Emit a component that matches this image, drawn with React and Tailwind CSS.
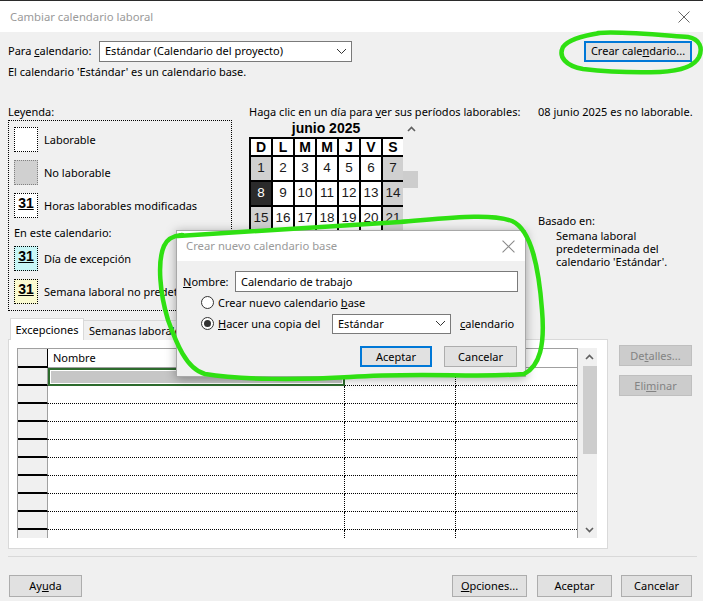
import React from 'react';

const CAL = "font-['Liberation_Sans',Arial,sans-serif]";

function CloseX({ color = '#666666', size = 12 }) {
  return (
    <svg width={size} height={size} viewBox="0 0 12 12">
      <path d="M0.5 0.5 L11.5 11.5 M11.5 0.5 L0.5 11.5" stroke={color} strokeWidth="1" fill="none" />
    </svg>
  );
}

function Chevron() {
  return (
    <svg width="11" height="7" viewBox="0 0 11 7">
      <path d="M1 1 L5.5 5.5 L10 1" stroke="#333333" strokeWidth="1" fill="none" />
    </svg>
  );
}

function ScrollArrow({ down = false }) {
  return (
    <svg width="9" height="6" viewBox="0 0 9 6">
      <path d={down ? 'M1 1 L4.5 4.5 L8 1' : 'M1 5 L4.5 1.5 L8 5'} stroke="#606060" strokeWidth="1.6" fill="none" />
    </svg>
  );
}

function Radio({ checked }) {
  return (
    <div className="w-[13px] h-[13px] rounded-full border border-[#333333] bg-white flex items-center justify-center shrink-0">
      {checked && <div className="w-[7px] h-[7px] rounded-full bg-[#333333]" />}
    </div>
  );
}

function LegendBox({ kind }) {
  const styles = {
    white: 'bg-white border-black',
    gray: 'bg-[#d0d0d0] border-[#808080]',
    mod: 'bg-white border-black',
    cyan: 'bg-[#c8f6f6] border-black',
    yellow: 'bg-[#fafad0] border-black',
  };
  return (
    <div className={`w-[24px] h-[25px] border border-dotted shrink-0 flex justify-center ${styles[kind]}`}>
      {kind !== 'white' && kind !== 'gray' && (
        <span className={`${CAL} text-[14px] font-bold underline leading-[16px] mt-[1px]`}>31</span>
      )}
    </div>
  );
}

function LegendItem({ kind, label, className = '' }) {
  return (
    <div className={`flex items-center h-[25px] ${className}`}>
      <LegendBox kind={kind} />
      <span className="ml-[6px] whitespace-nowrap">{label}</span>
    </div>
  );
}

// only the first three weeks show above the modal dialog
const weeks = [
  [1, 2, 3, 4, 5, 6, 7],
  [8, 9, 10, 11, 12, 13, 14],
  [15, 16, 17, 18, 19, 20, 21],
];

function Calendar() {
  return (
    <div className={`grid grid-cols-[repeat(7,20px)] gap-[2px] bg-black pl-[2px] pt-[2px] w-[154px] ${CAL}`}>
      {['D', 'L', 'M', 'M', 'J', 'V', 'S'].map((d, i) => (
        <div key={'h' + i} className="h-[16px] bg-white flex items-center justify-center text-[14px] font-bold">
          {d}
        </div>
      ))}
      {weeks.flat().map((n, i) => {
        const col = i % 7;
        const weekend = col === 0 || col === 6;
        let cls = 'bg-white text-[#1a1a1a]';
        if (n === 8) cls = 'bg-[#2b2b2b] text-white';
        else if (weekend) cls = 'bg-[#d0d0d0] text-[#1a1a1a]';
        return (
          <div key={i} className={`h-[23px] flex items-center justify-center pb-[2px] text-[13.5px] ${cls}`}>
            {n}
          </div>
        );
      })}
    </div>
  );
}

function TableRow({ selected }) {
  return (
    <div className="flex h-[18px] shrink-0">
      <div className="w-[30px] bg-[#f0f0f0] border-b-2 border-black border-r border-r-[#a0a0a0]" />
      {selected ? (
        <div className="w-[297px] border-2 border-[#2d6b2d] bg-white p-px">
          <div className="w-full h-full bg-[#c6c6c6]" />
        </div>
      ) : (
        <div className="w-[297px] border-b border-r border-dotted border-black" />
      )}
      <div className="w-[111px] border-b border-r border-dotted border-black" />
      <div className="w-[121px] border-b border-dotted border-black" />
    </div>
  );
}

function WinButton({ children, className = '' }) {
  return (
    <div className={`h-[22px] bg-[#e1e1e1] border border-[#adadad] flex items-center justify-center ${className}`}>
      {children}
    </div>
  );
}

export default function App() {
  return (
    <div className="relative w-[703px] h-[601px] overflow-hidden bg-[#f0f0f0] text-[11px] leading-[16px] text-black font-['Noto_Sans',sans-serif]">
      <div className="h-px bg-[#2b2b2b]" />
      {/* title bar */}
      <div className="h-[31px] bg-white flex items-center justify-between pl-[10px] pr-[13px]">
        <span className="text-[11.3px] text-[#9a9a9a]">Cambiar calendario laboral</span>
        <CloseX />
      </div>

      <div className="px-[8px]">
        {/* calendar selector */}
        <div className="mt-[8px] flex items-center h-[22px]">
          <span className="w-[91px] whitespace-nowrap">
            Para <u>c</u>alendario:
          </span>
          <div className="w-[253px] h-[21px] bg-white border border-[#7a7a7a] flex items-center justify-between pl-[5px] pr-[4px]">
            <span>Estándar (Calendario del proyecto)</span>
            <Chevron />
          </div>
          <div className="ml-auto mr-[3px] w-[108px] h-[21px] border-2 border-[#0078d7] bg-[#e1e1e1] flex items-center justify-center">
            Crear cale<u>n</u>dario...
          </div>
        </div>
        <div className="mt-[2px]">El calendario 'Estándar' es un calendario base.</div>

        {/* legend / calendar / info */}
        <div className="mt-[24px] flex">
          <div className="w-[224px] shrink-0">
            <div>Leyenda:</div>
            <div className="h-[191px] border border-dotted border-black pl-[5px] pt-[6px]">
              <LegendItem kind="white" label="Laborable" />
              <LegendItem kind="gray" label="No laborable" className="mt-[8px]" />
              <LegendItem kind="mod" label="Horas laborables modificadas" className="mt-[8px]" />
              <div className="mt-[7px]">En este calendario:</div>
              <LegendItem kind="cyan" label="Día de excepción" className="mt-[5px]" />
              <LegendItem kind="yellow" label="Semana laboral no predeterminada" className="mt-[8px]" />
            </div>
          </div>

          <div className="ml-[17px] w-[289px] shrink-0">
            <div className="whitespace-nowrap">
              Haga clic en un día para <u>v</u>er sus períodos laborables:
            </div>
            <div className="flex">
              <div className="w-[154px]">
                <div className={`h-[17px] text-center font-bold text-[14px] leading-[17px] ${CAL}`}>junio 2025</div>
                <Calendar />
              </div>
              <div className="w-[16px]">
                <div className="h-[17px] flex items-center justify-center">
                  <ScrollArrow />
                </div>
                <div className="mt-[34px] w-[15px] h-[17px] bg-[#cdcdcd]" />
              </div>
            </div>
          </div>

          <div className="flex-1">
            <div className="whitespace-nowrap">08 junio 2025 es no laborable.</div>
            <div className="mt-[93px]">Basado en:</div>
            <div className="pl-[18px] leading-[13px]">
              Semana laboral
              <br />
              predeterminada del
              <br />
              calendario 'Estándar'.
            </div>
          </div>
        </div>

        {/* tabs */}
        <div className="mt-[7px] flex items-end h-[22px] -mb-px relative z-10">
          <div className="ml-[2px] h-[22px] w-[74px] bg-white border border-[#d9d9d9] border-b-0 flex items-center justify-center">
            Excepciones
          </div>
          <div className="h-[20px] px-[5px] bg-[#f0f0f0] border border-[#d9d9d9] border-l-0 border-b-0 flex items-center">
            Semanas laborales
          </div>
        </div>

        <div className="flex items-start">
          <div className="w-[600px] h-[210px] bg-white border border-[#d9d9d9] pl-[8px] pt-[8px] shrink-0">
            <div className="flex h-[190px] w-[580px]">
              <div className="w-[561px] h-full border-l border-t border-r border-[#a0a0a0] overflow-hidden flex flex-col">
                <div className="flex h-[19px] shrink-0">
                  <div className="w-[30px] bg-[#f0f0f0] border-r border-b-2 border-black" />
                  <div className="w-[297px] pl-[5px] flex items-center border-b border-[#a0a0a0]">Nombre</div>
                  <div className="w-[111px] border-b border-[#a0a0a0]" />
                  <div className="w-[121px] border-b border-[#a0a0a0]" />
                </div>
                {Array.from({ length: 10 }).map((_, i) => (
                  <TableRow key={i} selected={i === 0} />
                ))}
              </div>
              <div className="w-[19px] h-full bg-[#f0f0f0] flex flex-col">
                <div className="h-[18px] flex items-center justify-center pl-[3px]">
                  <ScrollArrow />
                </div>
                <div className="ml-[5px] w-[14px] h-[88px] bg-[#cdcdcd]" />
                <div className="flex-1" />
                <div className="h-[16px] flex items-center justify-center pl-[3px]">
                  <ScrollArrow down />
                </div>
              </div>
            </div>
          </div>
          <div className="ml-[11px] mt-[6px] flex flex-col gap-[9px]">
            <div className="w-[73px] h-[21px] bg-[#cccccc] border border-[#bfbfbf] text-[#838383] flex items-center justify-center">
              De<u>t</u>alles...
            </div>
            <div className="w-[73px] h-[21px] bg-[#cccccc] border border-[#bfbfbf] text-[#838383] flex items-center justify-center">
              Eli<u>m</u>inar
            </div>
          </div>
        </div>

        <div className="mt-[7px] h-px bg-[#d9d9d9] -mr-[2px]" />

        <div className="mt-[18px] flex">
          <WinButton className="ml-[1px] w-[73px]">
            Ay<u>u</u>da
          </WinButton>
          <WinButton className="ml-auto w-[75px]">
            <u>O</u>pciones...
          </WinButton>
          <WinButton className="ml-[10px] w-[75px]">Aceptar</WinButton>
          <WinButton className="ml-[9px] mr-[3px] w-[71px]">Cancelar</WinButton>
        </div>
      </div>

      {/* modal dialog on top */}
      <div className="absolute z-20 left-[176px] top-[230px] w-[350px] h-[147px] bg-[#f0f0f0] border border-[#a8a8a8] shadow-[0_2px_10px_rgba(0,0,0,0.35)]">
        <div className="h-[30px] bg-white flex items-center justify-between pl-[9px] pr-[10px]">
          <span className="text-[11.3px] text-[#9a9a9a]">Crear nuevo calendario base</span>
          <CloseX color="#8a8a8a" size={13} />
        </div>
        <div className="px-[6px]">
          <div className="mt-[10px] flex items-center h-[21px]">
            <span className="w-[52px]">
              <u>N</u>ombre:
            </span>
            <div className="w-[283px] h-[21px] bg-white border border-[#7a7a7a] pl-[5px] flex items-center">
              Calendario de trabajo
            </div>
          </div>
          <div className="h-[21px] pl-[18px] flex items-center">
            <Radio />
            <span className="ml-[4px]">
              Crear nuevo calendario <u>b</u>ase
            </span>
          </div>
          <div className="h-[21px] pl-[18px] flex items-center">
            <Radio checked />
            <span className="ml-[4px] w-[114px]">
              <u>H</u>acer una copia del
            </span>
            <div className="w-[119px] h-[20px] bg-white border border-[#7a7a7a] pl-[5px] pr-[4px] flex items-center justify-between">
              <span>Estándar</span>
              <Chevron />
            </div>
            <span className="ml-[9px]">
              <u>c</u>alendario
            </span>
          </div>
          <div className="mt-[12px] flex justify-end gap-[12px] pr-[2px]">
            <div className="w-[72px] h-[21px] border-2 border-[#0078d7] bg-[#e1e1e1] flex items-center justify-center">
              Aceptar
            </div>
            <div className="w-[73px] h-[21px] border border-[#adadad] bg-[#e1e1e1] flex items-center justify-center">
              Cancelar
            </div>
          </div>
        </div>
      </div>

      {/* green hand-drawn highlights */}
      <svg className="absolute z-30 left-0 top-0 pointer-events-none" width="703" height="601" viewBox="0 0 703 601">
        <path
          d="M598 33 C620 31 660 35 688 37 C700 39 703 48 699 57 C694 67 680 71 660 72 C630 73 600 71 583 69 C566 66 558 57 563 47 C568 40 580 36 600 33"
          stroke="#2fe012"
          strokeWidth="4.5"
          fill="none"
          strokeLinecap="round"
        />
        <path
          d="M178 236 C220 233 300 228 400 222 C450 218 490 213 512 221 C532 230 539 270 542 310 C545 345 540 366 524 374 C480 378 420 372 350 377 C300 380 240 380 205 374 C186 369 176 342 168 320 C160 294 157 262 164 246 C167 239 172 236 182 235"
          stroke="#2fe012"
          strokeWidth="4.5"
          fill="none"
          strokeLinecap="round"
        />
      </svg>
    </div>
  );
}
